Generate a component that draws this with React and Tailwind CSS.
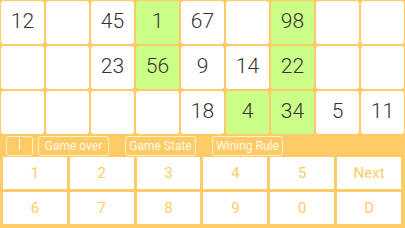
import React from "react";

const cells = [
  ["12", "", "45", "1", "67", "", "98", "", ""],
  ["", "", "23", "56", "9", "14", "22", "", ""],
  ["", "", "", "", "18", "4", "34", "5", "11"],
];
const green = new Set(["0-3", "0-6", "1-3", "1-6", "2-5", "2-6"]);
const keys = ["1", "2", "3", "4", "5", "Next", "6", "7", "8", "9", "0", "D"];

export default function App() {
  return (
    <div
      className="w-[405px] h-[228px] bg-[#ffcb66] overflow-hidden flex flex-col"
      style={{ fontFamily: "Roboto, 'Liberation Sans', sans-serif" }}
    >
      <div className="grid grid-cols-9 grid-rows-3 gap-[2px] p-[1px] h-[135px]">
        {cells.map((row, r) =>
          row.map((v, c) => (
            <div
              key={r + "-" + c}
              className={`rounded-[3px] flex items-center justify-center text-[21px] font-light text-[#333] pb-[2px] ${
                green.has(r + "-" + c) ? "bg-[#ccff88]" : "bg-white"
              }`}
            >
              {v}
            </div>
          ))
        )}
      </div>
      <div className="h-[22px] flex items-center pl-[6px] gap-[5px]">
        <div className="w-[27px] h-[20px] rounded-[3px] border border-[#fff0cc] flex items-center justify-center">
          <div className="w-[1px] h-[10px] bg-white mb-[4px]"></div>
        </div>
        <div className="h-[20px] w-[71px] rounded-[3px] border border-[#fff0cc] flex items-center justify-center text-[12px] text-[#fffaee]">
          Game over
        </div>
        <div className="h-[20px] w-[71px] ml-[11px] rounded-[3px] border border-[#fff0cc] flex items-center justify-center text-[12px] text-[#fffaee]">
          Game State
        </div>
        <div className="h-[20px] w-[71px] ml-[11px] rounded-[3px] border border-[#fff0cc] flex items-center justify-center text-[12px] text-[#fffaee]">
          Wining Rule
        </div>
      </div>
      <div className="grid grid-cols-6 gap-[3px] px-[3px] pr-[4px] h-[67px]">
        {keys.map((k) => (
          <div
            key={k}
            className="bg-white flex items-center justify-center text-[15px] text-[#ffcb66]"
          >
            {k}
          </div>
        ))}
      </div>
    </div>
  );
}
